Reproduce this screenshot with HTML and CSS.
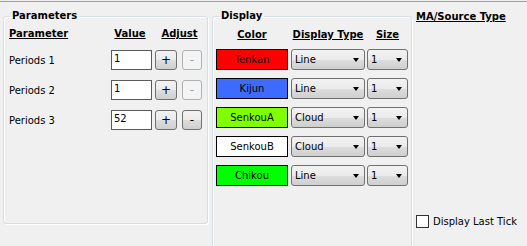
FILE: index.html
```html
<!DOCTYPE html>
<html lang="en">
<head>
  <meta charset="UTF-8">
  <title>Ichimoku Settings</title>
  <link rel="stylesheet" href="styles.css">
</head>
<body>
  <div class="frame-line"></div>

  <div class="panel">

    <!-- Parameters group -->
    <fieldset class="group params">
      <legend>Parameters</legend>
      <div class="param-grid">
        <span class="head left">Parameter</span>
        <span class="head">Value</span>
        <span class="head span2">Adjust</span>

        <span class="label">Periods 1</span>
        <span class="value">1</span>
        <span class="btn plus">+</span>
        <span class="btn minus disabled">-</span>

        <span class="label">Periods 2</span>
        <span class="value">1</span>
        <span class="btn plus">+</span>
        <span class="btn minus disabled">-</span>

        <span class="label">Periods 3</span>
        <span class="value">52</span>
        <span class="btn plus">+</span>
        <span class="btn minus">-</span>
      </div>
    </fieldset>

    <!-- Display group -->
    <fieldset class="group display">
      <legend>Display</legend>
      <div class="display-grid">
        <span class="head">Color</span>
        <span class="head">Display Type</span>
        <span class="head">Size</span>

        <span class="swatch" style="background:#ff0000">Tenkan</span>
        <span class="combo type"><span>Line</span><i class="arrow"></i></span>
        <span class="combo size"><span>1</span><i class="arrow"></i></span>

        <span class="swatch" style="background:#3d6bff">Kijun</span>
        <span class="combo type"><span>Line</span><i class="arrow"></i></span>
        <span class="combo size"><span>1</span><i class="arrow"></i></span>

        <span class="swatch" style="background:#80ff00">SenkouA</span>
        <span class="combo type"><span>Cloud</span><i class="arrow"></i></span>
        <span class="combo size"><span>1</span><i class="arrow"></i></span>

        <span class="swatch" style="background:#ffffff">SenkouB</span>
        <span class="combo type"><span>Cloud</span><i class="arrow"></i></span>
        <span class="combo size"><span>1</span><i class="arrow"></i></span>

        <span class="swatch" style="background:#00ff00">Chikou</span>
        <span class="combo type"><span>Line</span><i class="arrow"></i></span>
        <span class="combo size"><span>1</span><i class="arrow"></i></span>
      </div>
    </fieldset>

    <!-- MA / source -->
    <div class="side">
      <span class="head">MA/Source Type</span>
      <label class="check-row">
        <span class="check"></span>
        <span>Display Last Tick</span>
      </label>
    </div>

  </div>
</body>
</html>
```

FILE: styles.css
```css
/* general */
body {
  margin: 0;
  width: 527px;
  height: 246px;
  overflow: hidden;
  background-color: #f0f0f0;
  font-family: "DejaVu Sans", Tahoma, sans-serif;
  font-size: 10px;
  color: #000;
}

.frame-line {
  margin-top: 1px;
  height: 1px;
  background-color: #a0a0a0;
}

.panel {
  display: flex;
  align-items: flex-start;
  padding-left: 3px;
}

/* group boxes */
.group {
  box-sizing: border-box;
  margin: 7px 0 0 0;
  padding: 0;
  border: 1px solid #d5dfe5;
  border-radius: 3px;
  box-shadow: inset 1px 1px 0 #fff, 1px 1px 0 #fff;
}

.group legend {
  margin-left: 6px;
  padding: 0 2px 2px 2px;
  font-weight: bold;
  line-height: 13px;
}

.params {
  width: 205px;
  height: 215px;
}

/* runs off the bottom of the window */
.display {
  width: 200px;
  height: 237px;
  margin-left: 4px;
  border-bottom-width: 0;
  border-radius: 3px 3px 0 0;
}

.head {
  font-weight: bold;
  text-decoration: underline;
  text-align: center;
  line-height: 13px;
  white-space: nowrap;
}

.head.left {
  text-align: left;
}

/* parameter table */
.param-grid {
  display: grid;
  grid-template-columns: 1fr 41px 22px 22px;
  grid-template-rows: 13px 20px 20px 20px;
  column-gap: 3px;
  row-gap: 10px;
  align-items: center;
  padding: 3px 5px 0 5px;
}

.param-grid .head {
  align-self: start;
}

.param-grid .span2 {
  grid-column: span 2;
  padding-left: 2px;
}

.param-grid .head:nth-child(2) {
  margin-left: -3px;
}

.value {
  box-sizing: border-box;
  height: 20px;
  padding: 1px 0 0 2px;
  background-color: #fff;
  border: 1px solid #5a5a5a;
  line-height: 13px;
}

.btn {
  box-sizing: border-box;
  height: 20px;
  display: flex;
  align-items: center;
  justify-content: center;
  border: 1px solid #707070;
  border-radius: 3px;
  background: linear-gradient(#f2f2f2 0%, #ebebeb 50%, #dddddd 51%, #cfcfcf 100%);
  font-size: 12px;
}

.btn.minus {
  margin-left: 2px;
}

.btn.disabled {
  border-color: #adb2b5;
  background: #f4f4f4;
  color: #a0a0a0;
}

/* display table */
.display-grid {
  display: grid;
  grid-template-columns: 72px 74px 40px;
  grid-template-rows: 13px repeat(5, 21px);
  column-gap: 3px;
  row-gap: 8px;
  padding: 4px 0 0 3px;
}

.display-grid > .head {
  margin-bottom: 3px;
}

.display-grid > :nth-child(3n) {
  margin-left: -1px;
}

.swatch {
  box-sizing: border-box;
  height: 21px;
  display: flex;
  align-items: center;
  justify-content: center;
  border: 1px solid #000;
}

.combo {
  box-sizing: border-box;
  height: 21px;
  display: flex;
  align-items: center;
  justify-content: space-between;
  padding: 0 5px 0 3px;
  border: 1px solid #707070;
  border-radius: 3px;
  background: linear-gradient(#f2f2f2 0%, #ebebeb 50%, #dddddd 51%, #cfcfcf 100%);
}

.arrow {
  width: 0;
  height: 0;
  border-left: 3.5px solid transparent;
  border-right: 3.5px solid transparent;
  border-top: 4px solid #000;
}

/* right column */
.side {
  display: flex;
  flex-direction: column;
  align-items: flex-start;
  height: 226px;
  margin-left: 4px;
  padding-top: 8px;
  box-sizing: border-box;
}

.check-row {
  margin-top: auto;
  display: flex;
  align-items: center;
  gap: 4px;
}

.check {
  box-sizing: border-box;
  width: 13px;
  height: 13px;
  background-color: #fff;
  border: 1px solid #333;
}
```
